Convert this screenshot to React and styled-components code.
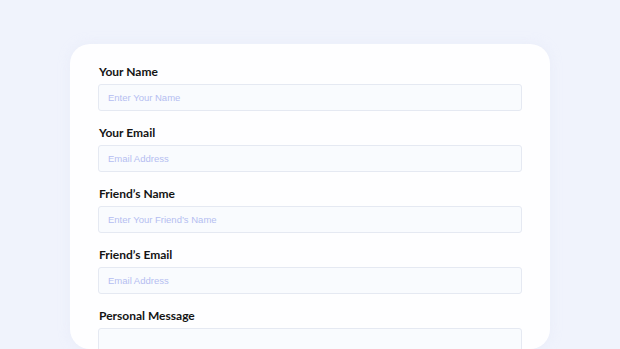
import React from "react";
import styled, { createGlobalStyle } from "styled-components";

const Global = createGlobalStyle`
  html, body { margin: 0; padding: 0; background: #f0f3fc; }
  body { font-family: Lato, "Noto Sans", sans-serif; overflow: hidden; }
  * { box-sizing: border-box; }
`;

const Page = styled.div`
  width: 620px;
  height: 349px;
  padding-top: 44px;
  display: flex;
  justify-content: center;
  overflow: hidden;
`;

const Card = styled.form`
  width: 480px;
  background: #fefeff;
  border-radius: 20px;
  padding: 20px 28px 40px;
  display: flex;
  flex-direction: column;
  gap: 14px;
  box-shadow: 0 0 12px rgba(220, 226, 245, 0.35);
`;

const Field = styled.div`
  display: flex;
  flex-direction: column;
  gap: 5px;
`;

const Label = styled.label`
  font-family: Lato, "Noto Sans", sans-serif;
  font-weight: 700;
  font-size: 12px;
  line-height: 15px;
  color: #141414;
  padding-left: 1px;
`;

const Input = styled.input`
  height: 27px;
  width: 100%;
  border: 1px solid #e5e9f2;
  border-radius: 3px;
  background: #f9fbfe;
  padding: 0 9px;
  font-family: "Liberation Sans", Arial, sans-serif;
  font-size: 9.5px;
  color: #222;
  outline: none;
  &::placeholder { color: #b5bef1; }
`;

const TextArea = styled.textarea`
  height: 80px;
  width: 100%;
  border: 1px solid #e5e9f2;
  border-radius: 3px;
  background: #f9fbfe;
  resize: none;
  outline: none;
`;

const fields = [
  { label: "Your Name", placeholder: "Enter Your Name" },
  { label: "Your Email", placeholder: "Email Address" },
  { label: "Friend’s Name", placeholder: "Enter Your Friend’s Name" },
  { label: "Friend’s Email", placeholder: "Email Address" },
];

export default function App() {
  return (
    <>
      <Global />
      <Page>
        <Card onSubmit={(e) => e.preventDefault()}>
          {fields.map((f) => (
            <Field key={f.label}>
              <Label>{f.label}</Label>
              <Input placeholder={f.placeholder} />
            </Field>
          ))}
          <Field>
            <Label>Personal Message</Label>
            <TextArea />
          </Field>
        </Card>
      </Page>
    </>
  );
}
